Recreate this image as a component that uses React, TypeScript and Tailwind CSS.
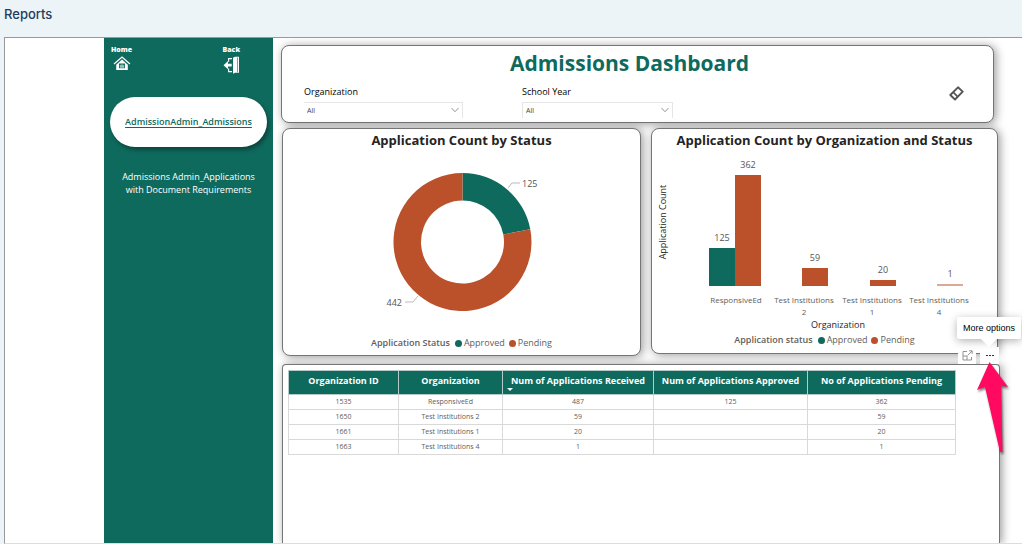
import React from "react";

interface ApplicationRow {
  id: number;
  organization: string;
  received: number;
  approved?: number;
  pending: number;
}

interface BarProps {
  x: number;
  value: number;
  color: string;
}

const APPROVED = "#0f6a5e";
const PENDING = "#bb512b";

const rows: ApplicationRow[] = [
  { id: 1535, organization: "ResponsiveEd", received: 487, approved: 125, pending: 362 },
  { id: 1650, organization: "Test Institutions 2", received: 59, pending: 59 },
  { id: 1661, organization: "Test Institutions 1", received: 20, pending: 20 },
  { id: 1663, organization: "Test Institutions 4", received: 1, pending: 1 },
];

const bars: BarProps[] = [
  { x: 57, value: 125, color: APPROVED },
  { x: 83, value: 362, color: PENDING },
  { x: 150, value: 59, color: PENDING },
  { x: 218, value: 20, color: PENDING },
  { x: 285, value: 1, color: PENDING },
];

const axisLabels = [
  { x: 84, lines: ["ResponsiveEd"] },
  { x: 152, lines: ["Test Institutions", "2"] },
  { x: 220, lines: ["Test Institutions", "1"] },
  { x: 287, lines: ["Test Institutions", "4"] },
];

const HomeIcon = () => (
  <svg width="18" height="15" viewBox="0 0 18 15" fill="none" aria-hidden="true">
    <path d="M1 8 9 1l8 7" stroke="#fff" strokeWidth="1.2" />
    <path d="M9 3.6 3.2 8.700V14h11.6V8.700Z" fill="#fff" />
    <path d="M6 7.500h6v4.700H6z" fill={APPROVED} />
    <path d="M7 9.200h4v2.200H7zM8.200 8.300h1.600" fill="#9fc3be" stroke="#9fc3be" strokeWidth=".5" />
  </svg>
);

const BackIcon = () => (
  <svg width="17" height="18" viewBox="0 0 17 18" fill="none" aria-hidden="true">
    <path d="M10 1.800 12 .800h4v16h-4L10 17.800Z" fill="#fff" />
    <path d="M14.500 1.500v14.800" stroke="#0f6a5e" strokeWidth=".6" />
    <path d="M9 2.600H5.600v3.200M5.600 12.400v3.200H9" stroke="#fff" strokeWidth="1.100" />
    <path d="M.500 9.200 5 5.100v2.700h3.700v2.800H5v2.700Z" fill="#fff" />
  </svg>
);

const EraserIcon = () => (
  <svg width="15" height="15" viewBox="0 0 15 15" fill="none" aria-hidden="true">
    <path
      d="M1.300 9 9 1.300 13.700 5.600 6 13.500Z"
      stroke="#555"
      strokeWidth="1.900"
      strokeLinejoin="round"
    />
    <path d="m4.200 6.200 4.600 4.700" stroke="#555" strokeWidth="1.700" />
  </svg>
);

const FocusIcon = () => (
  <svg width="11" height="11" viewBox="0 0 11 11" fill="none" stroke="#888" strokeWidth=".9" aria-hidden="true">
    <path d="M5 1.500H1V10h8.500V7M1 6h4v4M5.500 5.500 10 1M7 .8h3.200V4" />
  </svg>
);

const Slicer = ({
  id,
  label,
  className,
  selectClassName,
}: {
  id: string;
  label: string;
  className: string;
  selectClassName: string;
}) => (
  <div className={className}>
    <label htmlFor={id} className="block text-[9px] leading-[12px] text-black">
      {label}
    </label>
    <div className="relative mt-1">
      <select
        id={id}
        className={`${selectClassName} block h-4 w-full appearance-none border-t border-[#e6e6e6] bg-white pl-[3px] text-[7px] leading-[16px] text-[#444] outline-none`}
      >
        <option>All</option>
      </select>
      <svg
        className="pointer-events-none absolute right-1 top-[5px]"
        width="8"
        height="6"
        viewBox="0 0 8 6"
        fill="none"
        stroke="#888"
        strokeWidth=".9"
        aria-hidden="true"
      >
        <path d="m.500 1 3.500 3.700L7.500 1" />
      </svg>
    </div>
  </div>
);

const Legend = ({ title }: { title: string }) => (
  <div className="flex items-center justify-center text-[9px] leading-[12px] text-[#605e5c]">
    <span className="mr-[5px] font-semibold">{title}</span>
    <span className="mr-[2px] size-[7px] rounded-full bg-[#0f6a5e]" />
    <span className="mr-1">Approved</span>
    <span className="mr-[2px] size-[7px] rounded-full bg-[#bb512b]" />
    <span>Pending</span>
  </div>
);

const DonutChart = () => (
  <svg className="mx-auto block" width="181" height="187" viewBox="0 -3 181 187" role="img" aria-label="Application Count by Status">
    <path d="M91.500 20A69 69 0 0 1 159.300 76.300L132.300 81.400A41.500 41.500 0 0 0 91.500 47.500Z" fill={APPROVED} />
    <path d="M159.300 76.300A69 69 0 1 1 91.500 20V47.500A41.500 41.500 0 1 0 132.300 81.400Z" fill={PENDING} />
    <path d="M137 35 141 30h8M47 143l-5 6h-8" stroke="#bbb" fill="none" />
    <g className="text-[9px]" fill="#555">
      <text x="151" y="34">125</text>
      <text x="31" y="153" textAnchor="end">442</text>
    </g>
  </svg>
);

const BarChart = () => (
  <svg className="mx-auto block" width="345" height="184" viewBox="0 0 345 184" role="img" aria-label="Application Count by Organization and Status">
    {bars.map((bar) => {
      const height = Math.max(2, Math.round((bar.value * 111) / 362));
      return (
        <g key={bar.x}>
          <rect x={bar.x} y={136 - height} width="26" height={height} fill={bar.color} opacity={bar.value === 1 ? 0.5 : 1} />
          <text x={bar.x + 13} y={129 - height} textAnchor="middle" className="text-[9px]" fill="#555">
            {bar.value}
          </text>
        </g>
      );
    })}
    {axisLabels.map((label) => (
      <text key={label.x} y="153" textAnchor="middle" className="text-[8px]" fill="#605e5c">
        {label.lines.map((line, i) => (
          <tspan key={line} x={label.x} dy={i * 12}>
            {line}
          </tspan>
        ))}
      </text>
    ))}
    <text x="186" y="178" textAnchor="middle" className="text-[9px]" fill="#252423">
      Organization
    </text>
    <text transform="translate(14 72) rotate(-90)" textAnchor="middle" className="text-[9px]" fill="#252423">
      Application Count
    </text>
  </svg>
);

const Sidebar = () => (
  <aside className="w-[169px] shrink-0 bg-[#0f6a5e] px-[6px] pt-[6px] text-white">
    <nav>
      <div className="flex justify-between pl-px pr-[27px] text-[7px] font-extrabold leading-[12px]">
        <a href="#home" className="flex flex-col items-center">
          Home
          <HomeIcon />
        </a>
        <a href="#back" className="flex flex-col items-center">
          Back
          <BackIcon />
        </a>
      </div>
      <a
        href="#admissions"
        className="mt-[23px] flex h-[50px] items-center justify-center rounded-full bg-white text-[9px] font-semibold text-[#0f6a5e] underline underline-offset-2 shadow-[2px_3px_4px_rgba(0,0,0,0.35)]"
      >
        AdmissionAdmin_Admissions
      </a>
      <a href="#requirements" className="mt-[23px] block text-center text-[9px] font-medium leading-[13px]">
        Admissions Admin_Applications
        <br />
        with Document Requirements
      </a>
    </nav>
  </aside>
);

const ApplicationTable = () => (
  <table className="w-full table-fixed border-collapse text-center">
    <colgroup>
      <col className="w-[110px]" />
      <col className="w-[104px]" />
      <col className="w-[151px]" />
      <col className="w-[154px]" />
      <col className="w-[148px]" />
    </colgroup>
    <thead>
      <tr className="h-6 bg-[#0f6a5e] text-[9px] font-semibold leading-[12px] text-white [&>th]:whitespace-nowrap [&>th]:border [&>th]:border-[#b5c9c6] [&>th]:px-0 [&>th]:pb-[6px] [&>th]:pt-[3px]">
        <th>Organization ID</th>
        <th>Organization</th>
        <th className="relative">
          Num of Applications Received
          <span className="absolute bottom-[3px] left-1 border-x-[3px] border-t-[3px] border-x-transparent border-t-white" />
        </th>
        <th>Num of Applications Approved</th>
        <th>No of Applications Pending</th>
      </tr>
    </thead>
    <tbody>
      {rows.map((row) => (
        <tr key={row.id} className="h-[15px] text-[7px] leading-[12px] text-[#605e5c] [&>td]:border [&>td]:border-[#d9d9d9]">
          <td>{row.id}</td>
          <td>{row.organization}</td>
          <td>{row.received}</td>
          <td>{row.approved}</td>
          <td>{row.pending}</td>
        </tr>
      ))}
    </tbody>
  </table>
);

const VisualOptions = () => (
  <div className="absolute -top-[18px] right-0 flex gap-1">
    <button type="button" aria-label="Focus mode" className="flex h-[17px] w-[18px] items-center justify-center bg-white">
      <FocusIcon />
    </button>
    <button type="button" aria-label="More options" className="flex h-[17px] w-[19px] items-center justify-center gap-px bg-white">
      <span className="h-px w-[2px] bg-[#333]" />
      <span className="h-px w-[2px] bg-[#333]" />
      <span className="h-px w-[2px] bg-[#333]" />
    </button>
    <div
      role="tooltip"
      className="absolute -right-[22px] bottom-[25px] whitespace-nowrap rounded-[2px] bg-white px-[6px] py-[5px] font-['Liberation_Sans',sans-serif] text-[9px] leading-[12px] text-black shadow-[0_2px_8px_rgba(0,0,0,0.3)]"
    >
      More options
      <span className="absolute left-1/2 top-full -translate-x-1/2 border-x-[8px] border-t-[8px] border-x-transparent border-t-white" />
    </div>
    <svg
      className="pointer-events-none absolute -right-[10px] top-[15px] drop-shadow-[1px_2px_1px_rgba(0,0,0,0.5)]"
      width="32"
      height="92"
      viewBox="0 0 32 92"
      aria-hidden="true"
    >
      <path d="M12.500 0 31 25 24 23.500 25.500 90H23L8 25 0 28Z" fill="#ff0a60" />
    </svg>
  </div>
);

const cardClass = "border border-[#757575] bg-white shadow-[2px_1px_10px_rgba(0,0,0,0.4)]";

const App: React.FC = () => {
  return (
    <div className="flex min-h-screen flex-col bg-white font-['Open_Sans','Noto_Sans',sans-serif]">
      <div className="flex flex-1 flex-col bg-[#edf4f8] pl-1">
        <h1 className="flex h-[37px] items-start pt-[5px] font-['Inter',sans-serif] text-[13px] font-medium leading-[18px] text-[#213c5e]">
          Reports
        </h1>
        <div className="flex flex-1 overflow-hidden border-b border-l border-t border-b-[#ddd] border-l-[#999] border-t-[#999] bg-white pl-[99px]">
          <Sidebar />
          <main className="flex min-w-0 flex-1 flex-col pl-2 pr-[22px] pt-[7px]">
            <section className={`${cardClass} mr-[6px] h-[78px] rounded-lg px-[22px] pt-[3px]`}>
              <h2 className="pr-4 text-center text-[21px] font-bold leading-[28px] text-[#0f6a5e]">
                Admissions Dashboard
              </h2>
              <div className="mt-[9px] flex items-start">
                <Slicer id="organization" label="Organization" className="w-[159px]" selectClassName="border-r" />
                <Slicer id="school-year" label="School Year" className="ml-[59px] w-[151px]" selectClassName="border-x" />
                <button type="button" aria-label="Clear filters" className="ml-auto mr-[7px]">
                  <EraserIcon />
                </button>
              </div>
            </section>

            <div className="ml-px mr-[2px] mt-[5px] flex items-start gap-[10px]">
              <section className={`${cardClass} h-[228px] min-w-0 flex-[359] rounded-lg pt-px`}>
                <h3 className="text-center text-[13px] font-bold leading-[20px] text-[#252423]">
                  Application Count by Status
                </h3>
                <DonutChart />
                <Legend title="Application Status" />
              </section>
              <section className={`${cardClass} h-[226px] min-w-0 flex-[347] rounded-lg pt-px`}>
                <h3 className="text-center text-[13px] font-bold leading-[20px] text-[#252423]">
                  Application Count by Organization and Status
                </h3>
                <BarChart />
                <Legend title="Application status" />
              </section>
            </div>

            <section className={`${cardClass} relative ml-px mt-2 flex-1 rounded-t-[4px] border-b-0 pl-[5px] pr-[45px] pt-[5px]`}>
              <ApplicationTable />
              <VisualOptions />
            </section>
          </main>
        </div>
      </div>
      <div className="h-1" />
    </div>
  );
};

export default App;
